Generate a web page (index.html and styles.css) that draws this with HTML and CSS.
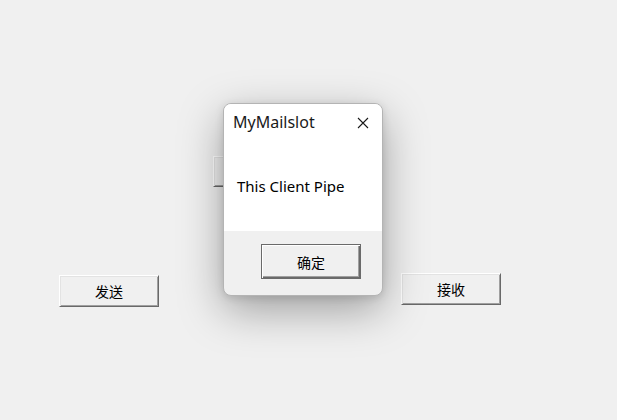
FILE: index.html
```html
<!DOCTYPE html>
<html lang="zh-CN">
<head>
<meta charset="utf-8">
<title>MyMailslot</title>
<link rel="stylesheet" href="styles.css">
</head>
<body>
<div class="form">
  <button class="btn hidden-btn" aria-hidden="true"></button>
  <div class="btn-row">
    <button class="btn send">发送</button>
    <button class="btn recv">接收</button>
  </div>

  <div class="msgbox" role="dialog">
    <div class="msgbox-body">
      <div class="msgbox-title">
        <span class="title-text">MyMailslot</span>
        <svg class="close" width="12" height="12" viewBox="0 0 12 12">
          <path d="M1 1 L11 11 M11 1 L1 11" stroke="#1a1a1a" stroke-width="1.1" fill="none"/>
        </svg>
      </div>
      <div class="msgbox-text">This Client Pipe</div>
    </div>
    <div class="msgbox-footer">
      <button class="btn btn-default">确定</button>
    </div>
  </div>
</div>
</body>
</html>
```

FILE: styles.css
```css
html, body {
  margin: 0;
  padding: 0;
  background: #f0f0f0;
  width: 617px;
  height: 420px;
  overflow: hidden;
}

.form {
  position: relative;
  width: 617px;
  height: 420px;
  font-family: "Noto Sans CJK SC", "Noto Sans", sans-serif;
}

.btn {
  box-sizing: border-box;
  width: 100px;
  height: 32px;
  padding: 0;
  background: #f0f0f0;
  color: #000;
  font-family: "Noto Sans CJK SC", sans-serif;
  font-size: 14px;
  border-style: solid;
  border-width: 1px;
  border-color: #ffffff #696969 #696969 #ffffff;
  box-shadow: inset 1px 1px #e3e3e3, inset -1px -1px #a0a0a0;
  outline: none;
}

.hidden-btn {
  position: absolute;
  left: 213px;
  top: 156px;
  height: 31px;
}

.btn-row {
  display: flex;
  align-items: flex-start;
  padding: 273px 0 0 59px;
  gap: 242px;
}

.send {
  margin-top: 2px;
}

.msgbox {
  position: absolute;
  left: 223px;
  top: 103px;
  width: 160px;
  height: 193px;
  box-sizing: border-box;
  border: 1px solid #b4b4b4;
  border-radius: 8px;
  overflow: hidden;
  background: #f0f0f0;
  box-shadow: 0 14px 44px rgba(0, 0, 0, 0.34), 0 2px 8px rgba(0, 0, 0, 0.12);
  display: flex;
  flex-direction: column;
}

.msgbox-body {
  background: #ffffff;
  height: 127px;
  flex: none;
}

.msgbox-title {
  display: flex;
  align-items: center;
  justify-content: space-between;
  padding: 7px 13px 0 9px;
  height: 22px;
}

.title-text {
  font-family: "Noto Sans", sans-serif;
  font-size: 16px;
  color: #1a1a1a;
  line-height: 22px;
}

.close {
  display: block;
  margin-top: 1px;
}

.msgbox-text {
  font-family: "Noto Sans", sans-serif;
  font-size: 15px;
  color: #000;
  line-height: 20px;
  padding: 43px 0 0 13px;
}

.msgbox-footer {
  flex: 1;
  padding: 13px 0 0 37px;
}

.btn-default {
  height: 35px;
  border: 1px solid #6a6a6a;
  box-shadow: inset 1px 1px #ffffff, inset -1px -1px #6a6a6a, inset -2px -2px #a0a0a0;
}
```
